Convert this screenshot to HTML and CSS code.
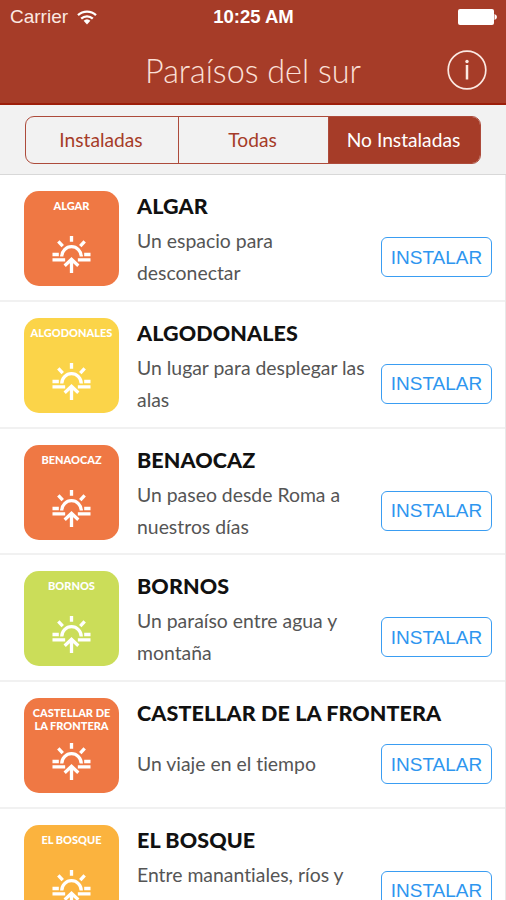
FILE: index.html
```html
<!DOCTYPE html>
<html lang="es">
<head>
    <meta charset="UTF-8">
    <meta name="viewport" content="width=device-width, initial-scale=1.0">
    <title>Paraísos del sur</title>
    <link rel="stylesheet" href="styles.css">
</head>
<body>

    <!-- Icono del amanecer, compartido por todas las filas -->
    <svg class="sprite" width="0" height="0">
        <symbol id="sunrise" viewBox="0 0 40 40">
            <g fill="none" stroke="#fff" stroke-width="3.400">
                <path d="M20 1v6M6.500 6.500l4.500 5M33.500 6.500l-4.500 5"/>
                <path d="M10 22a10 10 0 0 1 20 0"/>
                <path d="M.5 20h6.500M33 20h6.500M.5 25.500h13M26.500 25.500h13"/>
                <path d="M20 39V25M13 31.500l7-6.500 7 6.500"/>
            </g>
        </symbol>
    </svg>

    <header>
        <div class="status-bar">
            <div class="carrier">
                <span>Carrier</span>
                <svg class="wifi" viewBox="0 0 20 15">
                    <g fill="none" stroke="#fff" stroke-width="2.300">
                        <path d="M1 5.200a13 13 0 0 1 18 0"/>
                        <path d="M4.200 8.600a8.400 8.400 0 0 1 11.600 0"/>
                    </g>
                    <path d="M6.600 10.800a5 5 0 0 1 6.800 0L10 14.500z" fill="#fff"/>
                </svg>
            </div>
            <span class="time">10:25 AM</span>
            <svg class="battery" viewBox="0 0 39 16">
                <rect width="36" height="16" rx="2" fill="#fff"/>
                <path d="M36.500 5q2.500 1 2.500 3t-2.500 3z" fill="#fff"/>
            </svg>
        </div>
        <div class="nav-bar">
            <h1>Paraísos del sur</h1>
            <svg class="info" viewBox="0 0 40 40">
                <g fill="none" stroke="#fbe9e2" stroke-width="1.700">
                    <circle cx="20" cy="20" r="18.800"/>
                    <path d="M20 15v14.500" stroke-width="2.500"/>
                </g>
                <circle cx="20" cy="11.500" r="1.700" fill="#fbe9e2"/>
            </svg>
        </div>
    </header>

    <nav class="filters">
        <div class="tabs">
            <span class="tab">Instaladas</span>
            <span class="tab">Todas</span>
            <span class="tab active">No Instaladas</span>
        </div>
    </nav>

    <ul class="list">
        <li class="item">
            <div class="badge orange"><span>ALGAR</span><svg><use href="#sunrise"/></svg></div>
            <div class="info-text">
                <h2>ALGAR</h2>
                <p>Un espacio para desconectar</p>
            </div>
            <button>INSTALAR</button>
        </li>
        <li class="item">
            <div class="badge yellow"><span>ALGODONALES</span><svg><use href="#sunrise"/></svg></div>
            <div class="info-text">
                <h2>ALGODONALES</h2>
                <p>Un lugar para desplegar las alas</p>
            </div>
            <button>INSTALAR</button>
        </li>
        <li class="item">
            <div class="badge orange"><span>BENAOCAZ</span><svg><use href="#sunrise"/></svg></div>
            <div class="info-text">
                <h2>BENAOCAZ</h2>
                <p>Un paseo desde Roma a nuestros días</p>
            </div>
            <button>INSTALAR</button>
        </li>
        <li class="item">
            <div class="badge green"><span>BORNOS</span><svg><use href="#sunrise"/></svg></div>
            <div class="info-text">
                <h2>BORNOS</h2>
                <p>Un paraíso entre agua y montaña</p>
            </div>
            <button>INSTALAR</button>
        </li>
        <li class="item">
            <div class="badge orange"><span>CASTELLAR DE LA FRONTERA</span><svg><use href="#sunrise"/></svg></div>
            <div class="info-text">
                <h2>CASTELLAR DE LA FRONTERA</h2>
                <p>Un viaje en el tiempo</p>
            </div>
            <button>INSTALAR</button>
        </li>
        <li class="item">
            <div class="badge amber"><span>EL BOSQUE</span><svg><use href="#sunrise"/></svg></div>
            <div class="info-text">
                <h2>EL BOSQUE</h2>
                <p>Entre manantiales, ríos y fábulas</p>
            </div>
            <button>INSTALAR</button>
        </li>
    </ul>

</body>
</html>
```

FILE: styles.css
```css
* {
    box-sizing: border-box;
}

body {
    margin: 0;
    height: 900px;
    overflow: hidden;
    background-color: #fff;
    font-family: Lato, "Liberation Sans", sans-serif;
    font-variant-ligatures: none;
}

.sprite {
    display: block;
}

header {
    height: 105px;
    background-color: #a63c28;
    border-bottom: 2px solid #9c1e0a;
    color: #fff;
}

.status-bar {
    display: grid;
    grid-template-columns: 1fr auto 1fr;
    align-items: center;
    height: 34px;
    padding: 0 9px 0 10px;
    font-family: "Liberation Sans", Arial, sans-serif;
    font-size: 19px;
}

.carrier {
    display: flex;
    align-items: center;
    gap: 9px;
    color: #fbe9e2;
}

.wifi {
    width: 20px;
    height: 15px;
}

.time {
    font-weight: bold;
    font-size: 18.5px;
}

.battery {
    justify-self: end;
    width: 39px;
    height: 16px;
}

.nav-bar {
    display: grid;
    grid-template-columns: 1fr auto 1fr;
    align-items: center;
    height: 72px;
    padding: 0 19px;
}

h1 {
    grid-column: 2;
    margin: 0;
    font-size: 32.4px;
    font-weight: 300;
    color: #fbe0d8;
}

.info {
    justify-self: end;
    width: 40px;
    height: 40px;
}

.filters {
    height: 70px;
    padding: 11px 25px 0;
    background-color: #f2f2f2;
    border-bottom: 1px solid #d8d8d8;
}

.tabs {
    display: grid;
    grid-template-columns: 153px 150px 1fr;
    height: 48px;
    border: 1.5px solid #ad4b3b;
    border-radius: 9px;
    overflow: hidden;
}

.tab {
    display: flex;
    align-items: center;
    justify-content: center;
    padding: 0 2px 2px 0;
    border-right: 1px solid #ad4b3b;
    font-size: 19.2px;
    color: #a63c28;
}

.tab.active {
    background-color: #a63c28;
    border-right: none;
    color: #fff;
}

.list {
    margin: 0;
    padding: 0;
    list-style: none;
    border-right: 1px solid #e8e8e8;
}

.item {
    display: flex;
    height: 126.8px;
    padding: 16px 12px 0 24px;
    border-bottom: 2px solid #f1f1f1;
}

.badge {
    display: flex;
    flex-direction: column;
    justify-content: space-between;
    align-items: center;
    width: 95px;
    height: 95px;
    padding: 8px 4px 12px;
    border-radius: 15px;
    color: #fff;
    font-size: 11px;
    line-height: 13px;
    font-weight: 900;
    text-align: center;
}

.badge svg {
    width: 39px;
    height: 39px;
}

.orange {
    background-color: #ef7844;
}

.yellow {
    background-color: #fbd449;
}

.green {
    background-color: #cbdd59;
}

.amber {
    background-color: #fbb33e;
}

.info-text {
    display: flex;
    flex-direction: column;
    width: 250px;
    padding-left: 18px;
}

h2 {
    margin: 0;
    font-size: 21.5px;
    line-height: 30px;
    font-weight: 900;
    letter-spacing: 0.1px;
    color: #111;
    white-space: nowrap;
}

p {
    display: flex;
    align-items: center;
    height: 64px;
    margin: 4px 0 0;
    font-size: 19.4px;
    line-height: 32px;
    color: #555;
}

button {
    width: 111px;
    height: 40px;
    margin: 46px 1px 0 auto;
    padding: 1px 0 0;
    background-color: #fff;
    border: 1.5px solid #3a9df2;
    border-radius: 6px;
    color: #2e96ef;
    font-family: "Liberation Sans", Arial, sans-serif;
    font-size: 19px;
}
```
